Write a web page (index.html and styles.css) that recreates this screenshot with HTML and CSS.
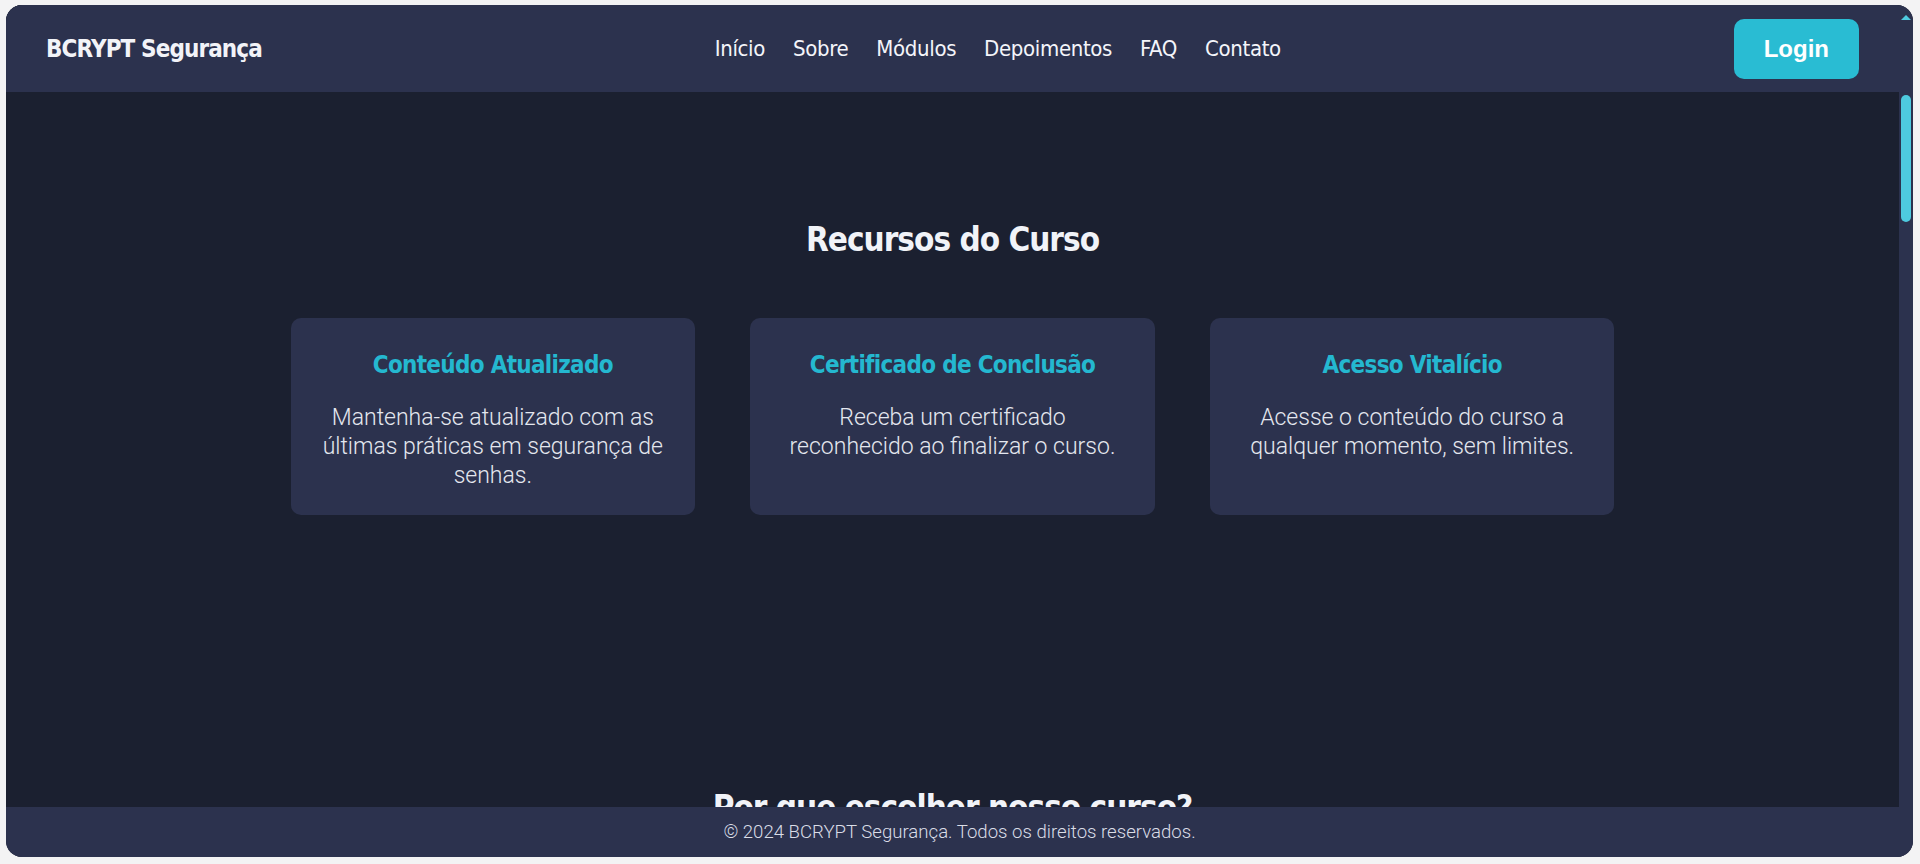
FILE: index.html
```html
<!DOCTYPE html>
<html lang="pt-BR">
<head>
<meta charset="utf-8">
<title>BCRYPT Segurança</title>
<link rel="stylesheet" href="styles.css">
</head>
<body>
<div class="window">
  <div class="main">
    <header class="topbar">
      <div class="logo">BCRYPT Segurança</div>
      <nav class="nav">
        <a href="#inicio">Início</a>
        <a href="#sobre">Sobre</a>
        <a href="#modulos">Módulos</a>
        <a href="#depoimentos">Depoimentos</a>
        <a href="#faq">FAQ</a>
        <a href="#contato">Contato</a>
      </nav>
      <a class="login" href="#login">Login</a>
    </header>

    <div class="content">
      <section class="section" id="sobre">
        <h2 class="section-title">Recursos do Curso</h2>
        <div class="features">
          <article class="card">
            <h3 class="card-title">Conteúdo Atualizado</h3>
            <p class="card-text">Mantenha-se atualizado com as últimas práticas em segurança de senhas.</p>
          </article>
          <article class="card">
            <h3 class="card-title">Certificado de Conclusão</h3>
            <p class="card-text">Receba um certificado reconhecido ao finalizar o curso.</p>
          </article>
          <article class="card">
            <h3 class="card-title">Acesso Vitalício</h3>
            <p class="card-text">Acesse o conteúdo do curso a qualquer momento, sem limites.</p>
          </article>
        </div>
      </section>

      <section class="section why" id="porque">
        <h2 class="section-title">Por que escolher nosso curso?</h2>
      </section>
    </div>
  </div>

  <div class="rail" aria-hidden="true">
    <span class="rail-arrow"></span>
    <span class="rail-thumb"></span>
  </div>

  <footer class="footer">© 2024 BCRYPT Segurança. Todos os direitos reservados.</footer>
</div>
</body>
</html>
```

FILE: styles.css
```css
* { box-sizing: border-box; }

body {
  margin: 0;
  padding: 5px 7px 7px 6px;
  background: #f3f3f4;
  font-family: Roboto, "Liberation Sans", sans-serif;
}

.window {
  height: 852px;
  border-radius: 16px;
  overflow: hidden;
  display: grid;
  grid-template-columns: 1fr 14px;
  grid-template-rows: 1fr 50px;
  background: #1b2030;
}

.main {
  grid-column: 1;
  grid-row: 1;
  display: flex;
  flex-direction: column;
  overflow: hidden;
  background: #1b2030;
}

.topbar {
  flex: 0 0 87px;
  padding: 0 40px;
  display: flex;
  align-items: center;
  justify-content: space-between;
  background: #2c324e;
}

.logo {
  font-family: "DejaVu Sans Condensed", "DejaVu Sans", sans-serif;
  font-weight: 700;
  font-size: 24px;
  letter-spacing: -0.9px;
  color: #f2f3f8;
}

.nav {
  display: flex;
  gap: 28px;
}

.nav a {
  font-family: "DejaVu Sans Condensed", "DejaVu Sans", sans-serif;
  font-size: 22px;
  letter-spacing: -0.35px;
  color: #f4f5fa;
  text-decoration: none;
}

.login {
  display: block;
  padding: 16px 30px;
  border-radius: 10px;
  background: #29bcd3;
  color: #ffffff;
  font-family: "Liberation Sans", Arial, sans-serif;
  font-weight: 700;
  font-size: 24px;
  text-decoration: none;
}

.content {
  flex: 1;
  overflow: hidden;
}

.section {
  padding: 128px 0;
  text-align: center;
}

.why {
  padding-top: 145px;
}

.section-title {
  margin: 0 0 58px;
  font-family: "DejaVu Sans Condensed", "DejaVu Sans", sans-serif;
  font-weight: 700;
  font-size: 33px;
  line-height: 1.2;
  letter-spacing: -1px;
  color: #f1f3f8;
}

.features {
  max-width: 1324px;
  margin: 0 auto;
  display: grid;
  grid-template-columns: repeat(3, 1fr);
  gap: 55px;
}

.card {
  padding: 33px 28px 25px;
  border-radius: 10px;
  background: #2c324e;
}

.card-title {
  margin: 0 0 24px;
  font-family: "DejaVu Sans Condensed", "DejaVu Sans", sans-serif;
  font-weight: 700;
  font-size: 24px;
  line-height: 1.2;
  letter-spacing: -0.7px;
  color: #24b8d0;
}

.card-text {
  margin: 0;
  font-weight: 300;
  font-size: 23px;
  line-height: 29px;
  color: #e4e7ef;
}

.rail {
  grid-column: 2;
  grid-row: 1;
  display: flex;
  flex-direction: column;
  align-items: center;
  padding-top: 10px;
  background: #2c324e;
}

.rail-arrow {
  width: 0;
  height: 0;
  border-left: 5px solid transparent;
  border-right: 5px solid transparent;
  border-bottom: 5px solid #4ecadf;
}

.rail-thumb {
  margin-top: 75px;
  width: 10px;
  height: 127px;
  border-radius: 5px;
  background: #4ecadf;
}

.footer {
  grid-column: 1 / -1;
  grid-row: 2;
  display: flex;
  align-items: center;
  justify-content: center;
  background: #2c324e;
  font-weight: 300;
  font-size: 18.6px;
  color: #dadde7;
}
```
